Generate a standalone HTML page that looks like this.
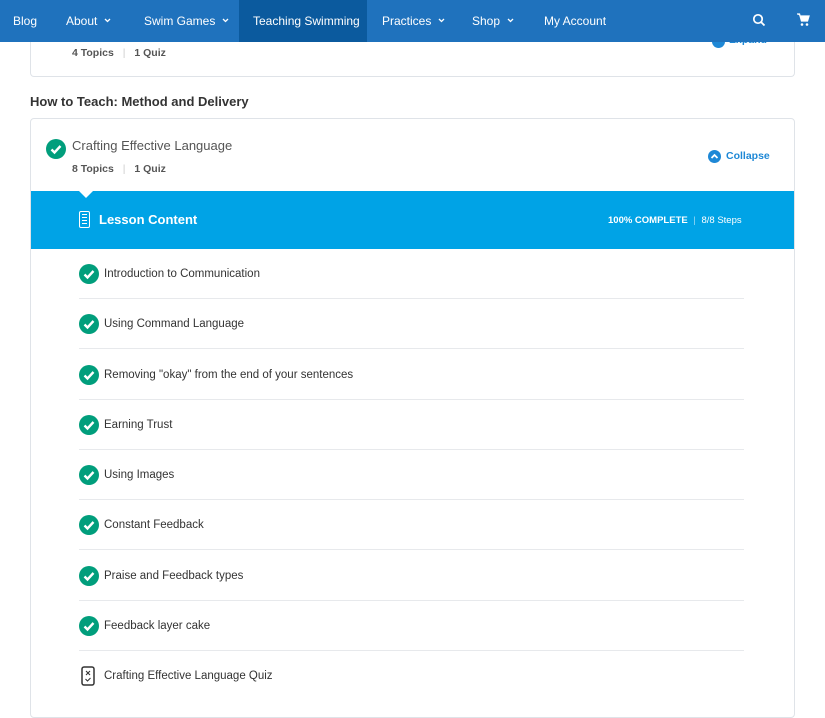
<!DOCTYPE html>
<html><head><style>
*{margin:0;padding:0;box-sizing:border-box}
body{width:825px;height:699px;overflow:hidden;background:#fff;font-family:"Liberation Sans",sans-serif;color:#333;position:relative}
.nav{position:absolute;top:0;left:0;width:825px;height:42px;background:#1f72bd;color:#fff;font-size:12px;z-index:5}
.nav span{position:absolute;top:14px;white-space:nowrap}
.nav span svg{margin-left:7px;vertical-align:2px}
.act{position:absolute;left:239px;top:0;width:128px;height:42px;background:#0b5a9e}
.card{position:absolute;left:30px;width:765px;border:1px solid #dfe3e8;border-radius:4px;background:#fff}
.meta{position:absolute;font-size:10.5px;font-weight:bold;color:#555}
.chk{position:absolute;width:20px;height:20px;border-radius:50%;background:#019e7c}
.row{position:absolute;left:79px;width:665px;height:50px;border-bottom:1px solid #e7e9ec}
.row .chk{left:0;top:15px}
.row span{position:absolute;left:25px;top:19px;font-size:11.5px;color:#333}
</style></head><body>
<div class="nav">
<div class="act"></div>
<span style="left:13px">Blog</span>
<span style="left:66px">About<svg width="7" height="5" viewBox="0 0 7 5"><path d="M1 1l2.5 2.5L6 1" fill="none" stroke="#fff" stroke-width="1.3"/></svg></span>
<span style="left:144px">Swim Games<svg width="7" height="5" viewBox="0 0 7 5"><path d="M1 1l2.5 2.5L6 1" fill="none" stroke="#fff" stroke-width="1.3"/></svg></span>
<span style="left:253px">Teaching Swimming</span>
<span style="left:382px">Practices<svg width="7" height="5" viewBox="0 0 7 5"><path d="M1 1l2.5 2.5L6 1" fill="none" stroke="#fff" stroke-width="1.3"/></svg></span>
<span style="left:472px">Shop<svg width="7" height="5" viewBox="0 0 7 5"><path d="M1 1l2.5 2.5L6 1" fill="none" stroke="#fff" stroke-width="1.3"/></svg></span>
<span style="left:544px">My Account</span>
<svg style="position:absolute;left:752px;top:13px" width="14" height="14" viewBox="0 0 14 14"><circle cx="6" cy="6" r="4.2" fill="none" stroke="#fff" stroke-width="1.7"/><path d="M9 9l3.5 3.5" stroke="#fff" stroke-width="1.8"/></svg>
<svg style="position:absolute;left:796px;top:13px" width="14" height="14" viewBox="0 0 14 14"><path d="M1 1h2.5l2 7h6l1.5-5H4.5" fill="#fff" stroke="#fff" stroke-width="1.3"/><circle cx="6" cy="11.5" r="1.3" fill="#fff"/><circle cx="11" cy="11.5" r="1.3" fill="#fff"/></svg>
</div>
<div class="card" style="top:20px;height:57px;border-top:none;border-radius:0 0 4px 4px">
<div class="meta" style="left:41px;top:27px">4 Topics <span style="color:#ccc;font-weight:normal;margin:0 6px">|</span> 1 Quiz</div>
<div style="position:absolute;left:681px;top:15px;width:13px;height:13px;background:#1e88d6;border-radius:50%"></div>
<div style="position:absolute;left:698px;top:14px;font-size:10.5px;font-weight:bold;color:#1e88d6">Expand</div>
</div>
<div style="position:absolute;left:30px;top:94px;font-size:13px;font-weight:bold;color:#333">How to Teach: Method and Delivery</div>
<div class="card" style="top:118px;height:600px">
<div class="chk" style="left:15px;top:20px"><svg width="20" height="20" viewBox="0 0 20 20"><path d="M5.5 10.5l3 3 6-6.5" fill="none" stroke="#fff" stroke-width="2.4"/></svg></div>
<div style="position:absolute;left:41px;top:19px;font-size:13px;color:#555">Crafting Effective Language</div>
<div class="meta" style="left:41px;top:44px">8 Topics <span style="color:#ccc;font-weight:normal;margin:0 6px">|</span> 1 Quiz</div>
<div style="position:absolute;left:677px;top:31px;width:13px;height:13px;border-radius:50%;background:#1e88d6"><svg width="13" height="13" viewBox="0 0 13 13"><path d="M3.5 8l3-3 3 3" fill="none" stroke="#fff" stroke-width="1.8"/></svg></div>
<div style="position:absolute;left:695px;top:31px;font-size:10.5px;font-weight:bold;color:#1e88d6">Collapse</div>
<div style="position:absolute;left:0;top:72px;width:763px;height:58px;background:#00a3e6">
<div style="position:absolute;left:47px;top:-1px;width:0;height:0;border-left:8px solid transparent;border-right:8px solid transparent;border-top:8px solid #fff"></div>
<div style="position:absolute;left:48px;top:20px;width:11px;height:17px;border:1.5px solid #fff;border-radius:2px;background:repeating-linear-gradient(#00a3e6 0 2px,#fff 2px 3px);background-clip:content-box;padding:1px 2px"></div>
<div style="position:absolute;left:68px;top:21px;font-size:13px;font-weight:bold;color:#fff">Lesson Content</div>
<div style="position:absolute;left:577px;top:24px;font-size:9.5px;font-weight:bold;color:#fff">100% COMPLETE <span style="font-weight:normal;opacity:.6;margin:0 3px">|</span> <span style="font-weight:normal">8/8 Steps</span></div>
</div>
</div>
<div class="row" style="top:249px"><div class="chk"><svg width="20" height="20" viewBox="0 0 20 20"><path d="M5.5 10.5l3 3 6-6.5" fill="none" stroke="#fff" stroke-width="2.4"/></svg></div><span>Introduction to Communication</span></div>
<div class="row" style="top:299px"><div class="chk"><svg width="20" height="20" viewBox="0 0 20 20"><path d="M5.5 10.5l3 3 6-6.5" fill="none" stroke="#fff" stroke-width="2.4"/></svg></div><span>Using Command Language</span></div>
<div class="row" style="top:350px"><div class="chk"><svg width="20" height="20" viewBox="0 0 20 20"><path d="M5.5 10.5l3 3 6-6.5" fill="none" stroke="#fff" stroke-width="2.4"/></svg></div><span>Removing "okay" from the end of your sentences</span></div>
<div class="row" style="top:400px"><div class="chk"><svg width="20" height="20" viewBox="0 0 20 20"><path d="M5.5 10.5l3 3 6-6.5" fill="none" stroke="#fff" stroke-width="2.4"/></svg></div><span>Earning Trust</span></div>
<div class="row" style="top:450px"><div class="chk"><svg width="20" height="20" viewBox="0 0 20 20"><path d="M5.5 10.5l3 3 6-6.5" fill="none" stroke="#fff" stroke-width="2.4"/></svg></div><span>Using Images</span></div>
<div class="row" style="top:500px"><div class="chk"><svg width="20" height="20" viewBox="0 0 20 20"><path d="M5.5 10.5l3 3 6-6.5" fill="none" stroke="#fff" stroke-width="2.4"/></svg></div><span>Constant Feedback</span></div>
<div class="row" style="top:551px"><div class="chk"><svg width="20" height="20" viewBox="0 0 20 20"><path d="M5.5 10.5l3 3 6-6.5" fill="none" stroke="#fff" stroke-width="2.4"/></svg></div><span>Praise and Feedback types</span></div>
<div class="row" style="top:601px"><div class="chk"><svg width="20" height="20" viewBox="0 0 20 20"><path d="M5.5 10.5l3 3 6-6.5" fill="none" stroke="#fff" stroke-width="2.4"/></svg></div><span>Feedback layer cake</span></div>
<div class="row" style="top:651px;border:none"><svg style="position:absolute;left:2px;top:15px" width="14" height="20" viewBox="0 0 14 20"><rect x="1" y="1" width="12" height="18" rx="2" fill="none" stroke="#333" stroke-width="1.5"/><path d="M5 5l4 4M9 5l-4 4M4.5 13l2 2 3-3" fill="none" stroke="#333" stroke-width="1.1"/></svg><span>Crafting Effective Language Quiz</span></div>
</body></html>
